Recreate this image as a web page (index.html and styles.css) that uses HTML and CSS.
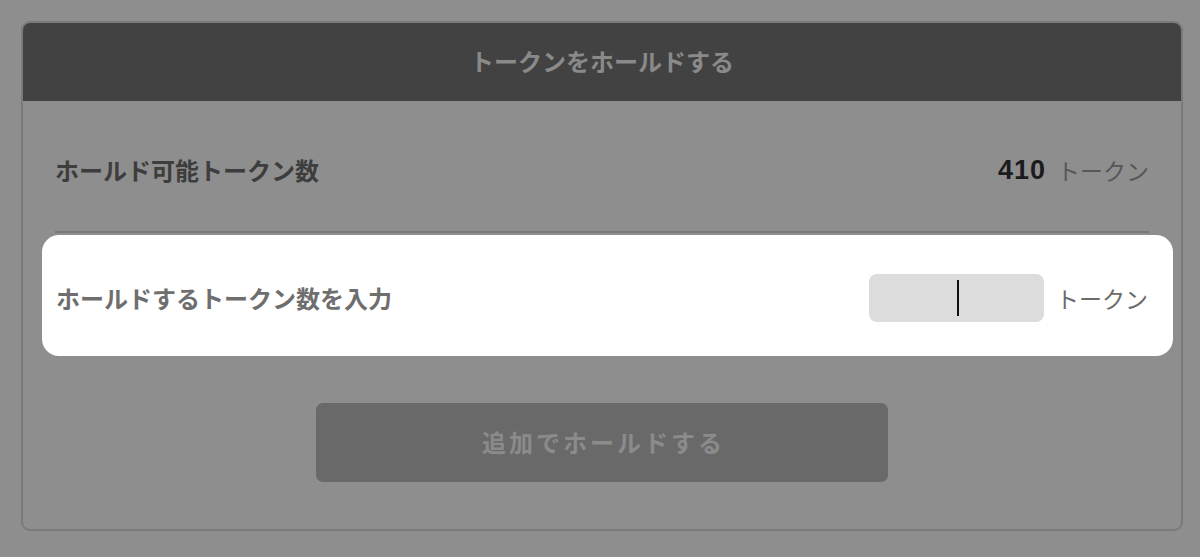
FILE: index.html
```html
<!DOCTYPE html>
<html lang="ja">
<head>
<meta charset="utf-8">
<title>トークンをホールドする</title>
<link rel="stylesheet" href="styles.css">
</head>
<body>
<div class="card">
  <div class="card-header">トークンをホールドする</div>
  <div class="card-body">
    <div class="row row-available">
      <span class="label label-dark">ホールド可能トークン数</span>
      <span class="value"><span class="num">410</span><span class="unit unit-dark">トークン</span></span>
    </div>
    <div class="row row-input">
      <span class="label label-light">ホールドするトークン数を入力</span>
      <span class="value">
        <span class="input"><span class="caret"></span></span>
        <span class="unit unit-light">トークン</span>
      </span>
    </div>
    <div class="actions">
      <div class="btn">追加でホールドする</div>
    </div>
  </div>
</div>
</body>
</html>
```

FILE: styles.css
```css
html, body {
  margin: 0;
  padding: 0;
}
body {
  background: #8e8e8e;
  width: 1200px;
  height: 557px;
  overflow: hidden;
  font-family: "Noto Sans CJK JP", "Noto Sans", sans-serif;
  padding: 21px 17px 0 21px;
  box-sizing: border-box;
}
.card {
  width: 1162px;
  height: 510px;
  box-sizing: border-box;
  border: 2px solid #7a7a7a;
  border-radius: 9px;
  overflow: hidden;
  display: flex;
  flex-direction: column;
}
.card-header {
  background: #424242;
  height: 78px;
  display: flex;
  align-items: center;
  justify-content: center;
  color: #8a8a8a;
  font-weight: 700;
  font-size: 24px;
  padding-bottom: 3px;
  box-sizing: border-box;
}
.card-body {
  display: flex;
  flex-direction: column;
}
.row {
  display: flex;
  align-items: center;
  justify-content: space-between;
}
.row-available {
  margin: 0 32px 0 32px;
  padding: 54px 0 46px 0;
  border-bottom: 2px solid #797979;
  line-height: 30px;
}
.row-input {
  margin: 2px 8px 0 19px;
  padding: 39px 25px 34px 14px;
  background: #ffffff;
  border-radius: 17px;
}
.label {
  font-weight: 700;
  font-size: 24px;
  line-height: 30px;
}
.label-dark { color: #3d3d3d; }
.label-light { color: #6e6e6e; }
.value {
  display: flex;
  align-items: center;
}
.num {
  font-family: "Liberation Sans", "Noto Sans", sans-serif;
  font-weight: 700;
  font-size: 27px;
  letter-spacing: 1px;
  color: #1b1b1b;
  margin-right: 11px;
}
.unit {
  font-size: 23px;
  line-height: 30px;
  font-weight: 400;
}
.unit-dark { color: #575757; }
.unit-light { color: #6b6b6b; }
.input {
  width: 175px;
  height: 48px;
  background: #dcdcdc;
  border-radius: 8px;
  display: flex;
  align-items: center;
  justify-content: center;
  margin-right: 12px;
}
.caret {
  width: 2px;
  height: 36px;
  background: #111111;
  margin-left: 2px;
}
.actions {
  display: flex;
  justify-content: center;
  margin-top: 47px;
}
.btn {
  width: 572px;
  height: 79px;
  background: #696969;
  border-radius: 7px;
  display: flex;
  align-items: center;
  justify-content: center;
  color: #8b8b8b;
  font-weight: 700;
  font-size: 24px;
  letter-spacing: 3px;
  padding-left: 3px;
  padding-bottom: 2px;
  box-sizing: border-box;
}
```
